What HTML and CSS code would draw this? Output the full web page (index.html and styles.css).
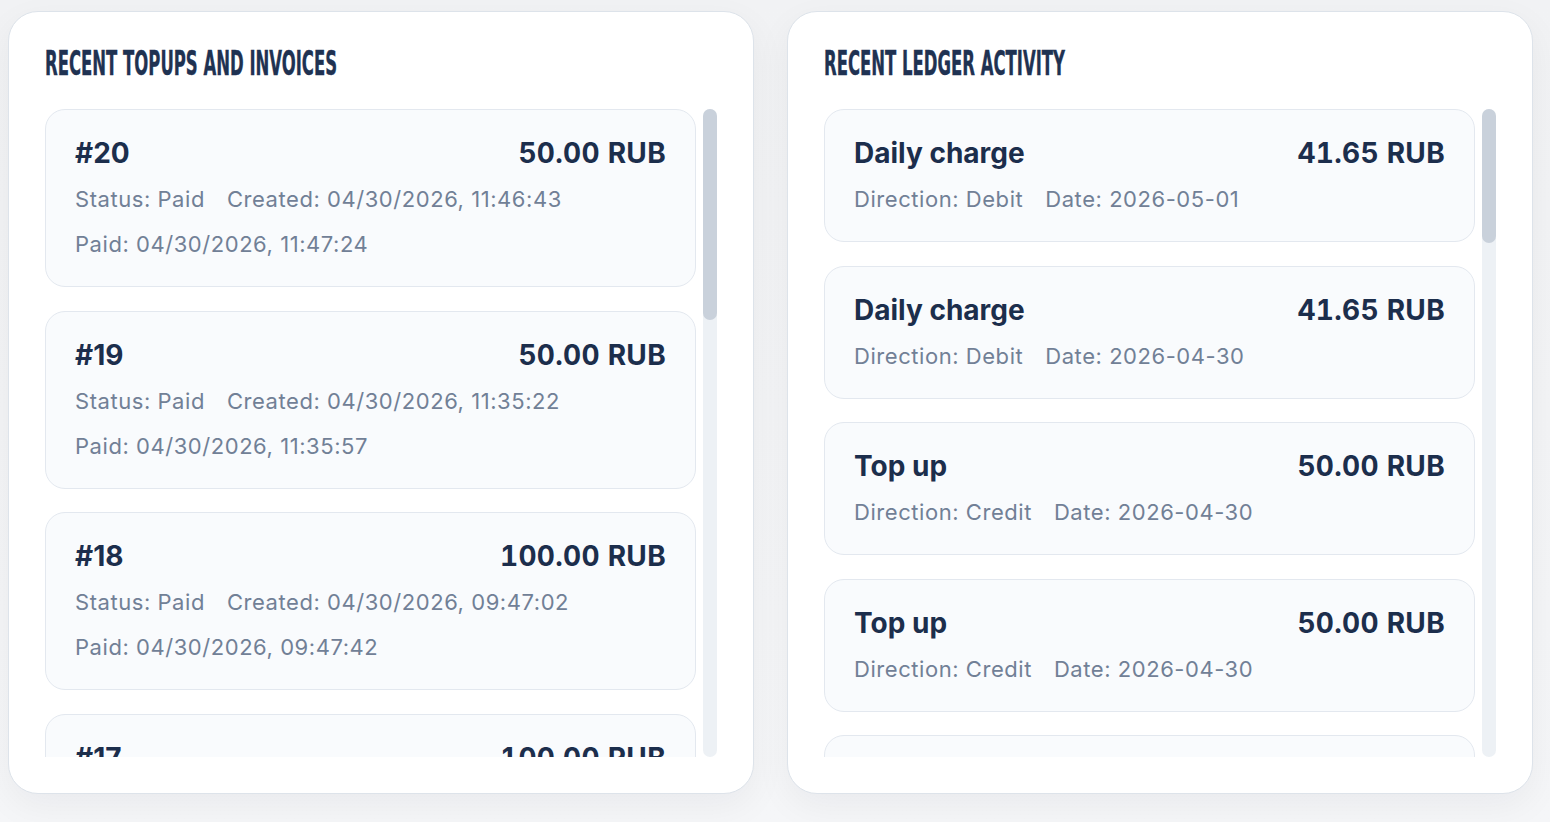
FILE: index.html
```html
<!DOCTYPE html>
<html lang="en">
<head>
    <meta charset="UTF-8">
    <meta name="viewport" content="width=device-width, initial-scale=1.0">
    <title>Billing Activity</title>
    <link rel="stylesheet" href="styles.css">
</head>
<body>

    <div class="layout">
        <section class="panel">
            <h2 class="panel-title"><span>Recent topups and invoices</span></h2>
            <div class="list-wrap">
                <div class="list">
                    <div class="item">
                        <div class="item-head"><span>#20</span><span class="amount">50.00 RUB</span></div>
                        <div class="item-meta"><span>Status: Paid</span><span>Created: 04/30/2026, 11:46:43</span><span>Paid: 04/30/2026, 11:47:24</span></div>
                    </div>
                    <div class="item">
                        <div class="item-head"><span>#19</span><span class="amount">50.00 RUB</span></div>
                        <div class="item-meta"><span>Status: Paid</span><span>Created: 04/30/2026, 11:35:22</span><span>Paid: 04/30/2026, 11:35:57</span></div>
                    </div>
                    <div class="item">
                        <div class="item-head"><span>#18</span><span class="amount">100.00 RUB</span></div>
                        <div class="item-meta"><span>Status: Paid</span><span>Created: 04/30/2026, 09:47:02</span><span>Paid: 04/30/2026, 09:47:42</span></div>
                    </div>
                    <div class="item">
                        <div class="item-head"><span>#17</span><span class="amount">100.00 RUB</span></div>
                        <div class="item-meta"><span>Status: Paid</span><span>Created: 04/29/2026, 18:12:30</span><span>Paid: 04/29/2026, 18:13:05</span></div>
                    </div>
                    <div class="item">
                        <div class="item-head"><span>#16</span><span class="amount">50.00 RUB</span></div>
                        <div class="item-meta"><span>Status: Paid</span><span>Created: 04/29/2026, 10:04:11</span><span>Paid: 04/29/2026, 10:04:48</span></div>
                    </div>
                    <div class="item">
                        <div class="item-head"><span>#15</span><span class="amount">200.00 RUB</span></div>
                        <div class="item-meta"><span>Status: Paid</span><span>Created: 04/28/2026, 15:21:09</span><span>Paid: 04/28/2026, 15:21:40</span></div>
                    </div>
                    <div class="item">
                        <div class="item-head"><span>#14</span><span class="amount">50.00 RUB</span></div>
                        <div class="item-meta"><span>Status: Paid</span><span>Created: 04/27/2026, 12:55:17</span><span>Paid: 04/27/2026, 12:55:59</span></div>
                    </div>
                    <div class="item">
                        <div class="item-head"><span>#13</span><span class="amount">100.00 RUB</span></div>
                        <div class="item-meta"><span>Status: Paid</span><span>Created: 04/26/2026, 09:30:44</span><span>Paid: 04/26/2026, 09:31:20</span></div>
                    </div>
                    <div class="item">
                        <div class="item-head"><span>#12</span><span class="amount">50.00 RUB</span></div>
                        <div class="item-meta"><span>Status: Paid</span><span>Created: 04/25/2026, 20:08:03</span><span>Paid: 04/25/2026, 20:08:37</span></div>
                    </div>
                    <div class="item">
                        <div class="item-head"><span>#11</span><span class="amount">50.00 RUB</span></div>
                        <div class="item-meta"><span>Status: Paid</span><span>Created: 04/24/2026, 14:42:26</span><span>Paid: 04/24/2026, 14:43:01</span></div>
                    </div>
                </div>
                <div class="scrollbar"><div class="thumb thumb-invoices"></div></div>
            </div>
        </section>

        <section class="panel">
            <h2 class="panel-title"><span>Recent ledger activity</span></h2>
            <div class="list-wrap">
                <div class="list">
                    <div class="item">
                        <div class="item-head"><span>Daily charge</span><span class="amount">41.65 RUB</span></div>
                        <div class="item-meta"><span>Direction: Debit</span><span>Date: 2026-05-01</span></div>
                    </div>
                    <div class="item">
                        <div class="item-head"><span>Daily charge</span><span class="amount">41.65 RUB</span></div>
                        <div class="item-meta"><span>Direction: Debit</span><span>Date: 2026-04-30</span></div>
                    </div>
                    <div class="item">
                        <div class="item-head"><span>Top up</span><span class="amount">50.00 RUB</span></div>
                        <div class="item-meta"><span>Direction: Credit</span><span>Date: 2026-04-30</span></div>
                    </div>
                    <div class="item">
                        <div class="item-head"><span>Top up</span><span class="amount">50.00 RUB</span></div>
                        <div class="item-meta"><span>Direction: Credit</span><span>Date: 2026-04-30</span></div>
                    </div>
                    <div class="item">
                        <div class="item-head"><span>Top up</span><span class="amount">100.00 RUB</span></div>
                        <div class="item-meta"><span>Direction: Credit</span><span>Date: 2026-04-30</span></div>
                    </div>
                    <div class="item">
                        <div class="item-head"><span>Daily charge</span><span class="amount">41.65 RUB</span></div>
                        <div class="item-meta"><span>Direction: Debit</span><span>Date: 2026-04-29</span></div>
                    </div>
                    <div class="item">
                        <div class="item-head"><span>Top up</span><span class="amount">100.00 RUB</span></div>
                        <div class="item-meta"><span>Direction: Credit</span><span>Date: 2026-04-29</span></div>
                    </div>
                    <div class="item">
                        <div class="item-head"><span>Daily charge</span><span class="amount">41.65 RUB</span></div>
                        <div class="item-meta"><span>Direction: Debit</span><span>Date: 2026-04-28</span></div>
                    </div>
                    <div class="item">
                        <div class="item-head"><span>Top up</span><span class="amount">200.00 RUB</span></div>
                        <div class="item-meta"><span>Direction: Credit</span><span>Date: 2026-04-28</span></div>
                    </div>
                    <div class="item">
                        <div class="item-head"><span>Daily charge</span><span class="amount">41.65 RUB</span></div>
                        <div class="item-meta"><span>Direction: Debit</span><span>Date: 2026-04-27</span></div>
                    </div>
                    <div class="item">
                        <div class="item-head"><span>Top up</span><span class="amount">50.00 RUB</span></div>
                        <div class="item-meta"><span>Direction: Credit</span><span>Date: 2026-04-27</span></div>
                    </div>
                    <div class="item">
                        <div class="item-head"><span>Daily charge</span><span class="amount">41.65 RUB</span></div>
                        <div class="item-meta"><span>Direction: Debit</span><span>Date: 2026-04-26</span></div>
                    </div>
                    <div class="item">
                        <div class="item-head"><span>Top up</span><span class="amount">100.00 RUB</span></div>
                        <div class="item-meta"><span>Direction: Credit</span><span>Date: 2026-04-26</span></div>
                    </div>
                    <div class="item">
                        <div class="item-head"><span>Daily charge</span><span class="amount">41.65 RUB</span></div>
                        <div class="item-meta"><span>Direction: Debit</span><span>Date: 2026-04-25</span></div>
                    </div>
                    <div class="item">
                        <div class="item-head"><span>Top up</span><span class="amount">50.00 RUB</span></div>
                        <div class="item-meta"><span>Direction: Credit</span><span>Date: 2026-04-25</span></div>
                    </div>
                    <div class="item">
                        <div class="item-head"><span>Daily charge</span><span class="amount">41.65 RUB</span></div>
                        <div class="item-meta"><span>Direction: Debit</span><span>Date: 2026-04-24</span></div>
                    </div>
                    <div class="item">
                        <div class="item-head"><span>Top up</span><span class="amount">50.00 RUB</span></div>
                        <div class="item-meta"><span>Direction: Credit</span><span>Date: 2026-04-24</span></div>
                    </div>
                    <div class="item">
                        <div class="item-head"><span>Daily charge</span><span class="amount">41.65 RUB</span></div>
                        <div class="item-meta"><span>Direction: Debit</span><span>Date: 2026-04-23</span></div>
                    </div>
                    <div class="item">
                        <div class="item-head"><span>Top up</span><span class="amount">100.00 RUB</span></div>
                        <div class="item-meta"><span>Direction: Credit</span><span>Date: 2026-04-23</span></div>
                    </div>
                    <div class="item">
                        <div class="item-head"><span>Daily charge</span><span class="amount">41.65 RUB</span></div>
                        <div class="item-meta"><span>Direction: Debit</span><span>Date: 2026-04-22</span></div>
                    </div>
                </div>
                <div class="scrollbar"><div class="thumb thumb-ledger"></div></div>
            </div>
        </section>
    </div>

</body>
</html>
```

FILE: styles.css
```css
body {
    font-family: Inter, "Noto Sans", sans-serif;
    margin: 0;
    padding: 0;
    background: linear-gradient(180deg, #f1f2f4 0%, #f5f6f8 100%);
    color: #1c2e4c;
    height: 822px;
    overflow: hidden;
}
.layout {
    display: grid;
    grid-template-columns: 1fr 1fr;
    gap: 33px;
    padding: 11px 17px 0 8px;
}
.panel {
    background: #fff;
    border: 1px solid #dde3ea;
    border-radius: 30px;
    padding: 36px 36px 36px 36px;
    box-shadow: 0 12px 36px rgba(15, 23, 42, 0.05);
}
.panel-title {
    margin: 0 0 29px 0;
    height: 32px;
    line-height: 32px;
    font-family: "Liberation Sans Narrow", "DejaVu Sans Condensed", "Liberation Sans", sans-serif;
    font-size: 33px;
    font-weight: 700;
    text-transform: uppercase;
    color: #1f3252;
    white-space: nowrap;
    -webkit-text-stroke: 0.4px #1f3252;
}
.panel-title span {
    display: inline-block;
    transform: scaleX(0.555);
    transform-origin: left center;
}
.list-wrap {
    display: flex;
    gap: 7px;
    height: 648px;
}
.list {
    flex: 1;
    overflow: hidden;
    display: flex;
    flex-direction: column;
    gap: 23.5px;
}
.scrollbar {
    width: 14px;
    flex: none;
    background: #edf1f5;
    border-radius: 7px;
}
.thumb {
    background: #c9d1db;
    border-radius: 7px;
}
.thumb-invoices {
    height: 211px;
}
.thumb-ledger {
    height: 134px;
}
.item {
    flex: none;
    background: #f9fbfd;
    border: 1px solid #e3e8ef;
    border-radius: 20px;
    padding: 26px 29px 25px 29px;
}
.item-head {
    display: flex;
    justify-content: space-between;
    font-size: 28px;
    font-weight: 700;
    line-height: 34px;
    color: #1c2e4c;
}
.item-head .amount {
    font-feature-settings: "tnum";
    letter-spacing: 0.3px;
}
.item-meta {
    margin-top: 13px;
    display: flex;
    flex-wrap: wrap;
    column-gap: 22px;
    row-gap: 12px;
    font-size: 22px;
    line-height: 33px;
    letter-spacing: 0.55px;
    color: #718096;
}
```
